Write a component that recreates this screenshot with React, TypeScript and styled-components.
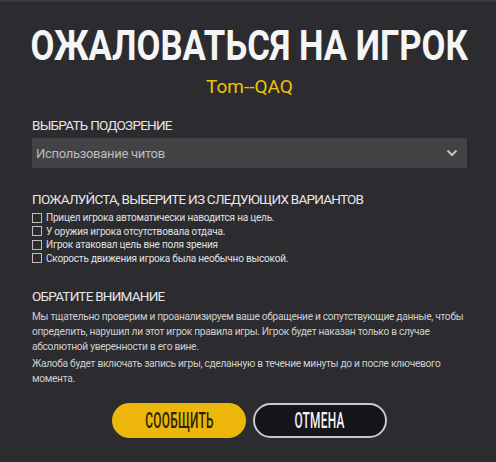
import React, { useState } from "react";
import styled, { createGlobalStyle } from "styled-components";

const GlobalStyle = createGlobalStyle`
  html, body {
    margin: 0;
    padding: 0;
    background: #2c2b30;
  }
  body {
    font-family: Roboto, "Liberation Sans", sans-serif;
    color: #e4e4e4;
  }
`;

const Panel = styled.div`
  width: 496px;
  height: 462px;
  box-sizing: border-box;
  background: #2c2b30;
  border-top: 2px solid #3a393e;
  padding: 20px 29px 0 32px;
  display: flex;
  flex-direction: column;
`;

const Title = styled.h1`
  margin: 0;
  font-size: 42px;
  line-height: 48px;
  font-weight: 700;
  color: #f5f5f5;
  display: flex;
  justify-content: center;
  white-space: nowrap;

  span {
    flex-shrink: 0;
    transform: scaleX(0.825);
  }
`;

const PlayerName = styled.div`
  margin-top: 6px;
  text-align: center;
  font-size: 19px;
  line-height: 22px;
  color: #eac400;
`;

const SectionLabel = styled.div<{ $top: number }>`
  margin-top: ${(p) => p.$top}px;
  font-size: 13.5px;
  line-height: 16px;
  color: #e6e6e6;
  letter-spacing: -0.75px;
`;

const Select = styled.div`
  margin-top: 5px;
  height: 30px;
  background: #434346;
  display: flex;
  align-items: center;
  justify-content: space-between;
  padding: 0 9px 0 4px;
  font-size: 13px;
  color: #bdbdbd;
  letter-spacing: -0.3px;
`;

const OptionList = styled.div`
  margin-top: 4px;
  display: flex;
  flex-direction: column;
`;

const OptionRow = styled.label`
  display: flex;
  align-items: center;
  gap: 4px;
  height: 13.5px;
  font-size: 10px;
  color: #e0e0e0;
  letter-spacing: -0.2px;
  cursor: pointer;
`;

const Box = styled.span<{ $on: boolean }>`
  width: 8px;
  height: 8px;
  border: 1px solid #bdbdbd;
  background: ${(p) => (p.$on ? "#e9c31a" : "transparent")};
  flex-shrink: 0;
`;

const Paragraph = styled.p<{ $top: number }>`
  margin: ${(p) => p.$top}px -4px 0 0;
  font-size: 10.2px;
  line-height: 15px;
  color: #cfcfcf;
  letter-spacing: -0.3px;
`;

const Actions = styled.div`
  margin-top: auto;
  margin-bottom: 24px;
  display: flex;
  justify-content: center;
  gap: 7px;
`;

const PillButton = styled.button<{ $primary?: boolean }>`
  width: 134px;
  height: 35px;
  border-radius: 18px;
  box-sizing: border-box;
  border: ${(p) => (p.$primary ? "none" : "2px solid #c9c9c9")};
  background: ${(p) => (p.$primary ? "#ecb60a" : "#16151a")};
  color: ${(p) => (p.$primary ? "#2a2200" : "#f4f4f4")};
  display: flex;
  align-items: center;
  justify-content: center;
  cursor: pointer;
  padding: 0;

  span {
    display: inline-block;
    font-family: Roboto, "Liberation Sans", sans-serif;
    font-size: 22px;
    font-weight: 500;
    transform: scaleX(0.54);
    letter-spacing: 0.5px;
  }
`;

const options = [
  "Прицел игрока автоматически наводится на цель.",
  "У оружия игрока отсутствовала отдача.",
  "Игрок атаковал цель вне поля зрения",
  "Скорость движения игрока была необычно высокой.",
];

const Chevron = () => (
  <svg width="12" height="8" viewBox="0 0 12 8">
    <path d="M1.5 1.5 L6 6 L10.5 1.5" fill="none" stroke="#c4c4c4" strokeWidth="2" />
  </svg>
);

export default function App() {
  const [checked, setChecked] = useState<boolean[]>([false, false, false, false]);

  const toggle = (i: number) =>
    setChecked((prev) => prev.map((v, j) => (j === i ? !v : v)));

  return (
    <>
      <GlobalStyle />
      <Panel>
        <Title>
          <span>ОЖАЛОВАТЬСЯ НА ИГРОК</span>
        </Title>
        <PlayerName>Tom--QAQ</PlayerName>

        <SectionLabel $top={19}>ВЫБРАТЬ ПОДОЗРЕНИЕ</SectionLabel>
        <Select>
          <span>Использование читов</span>
          <Chevron />
        </Select>

        <SectionLabel $top={23}>ПОЖАЛУЙСТА, ВЫБЕРИТЕ ИЗ СЛЕДУЮЩИХ ВАРИАНТОВ</SectionLabel>
        <OptionList>
          {options.map((text, i) => (
            <OptionRow key={text} onClick={() => toggle(i)}>
              <Box $on={checked[i]} />
              {text}
            </OptionRow>
          ))}
        </OptionList>

        <SectionLabel $top={23}>ОБРАТИТЕ ВНИМАНИЕ</SectionLabel>
        <Paragraph $top={5}>
          Мы тщательно проверим и проанализируем ваше обращение и сопутствующие данные, чтобы
          определить, нарушил ли этот игрок правила игры. Игрок будет наказан только в случае
          абсолютной уверенности в его вине.
        </Paragraph>
        <Paragraph $top={2}>
          Жалоба будет включать запись игры, сделанную в течение минуты до и после ключевого
          момента.
        </Paragraph>

        <Actions>
          <PillButton $primary>
            <span>СООБЩИТЬ</span>
          </PillButton>
          <PillButton>
            <span>ОТМЕНА</span>
          </PillButton>
        </Actions>
      </Panel>
    </>
  );
}
